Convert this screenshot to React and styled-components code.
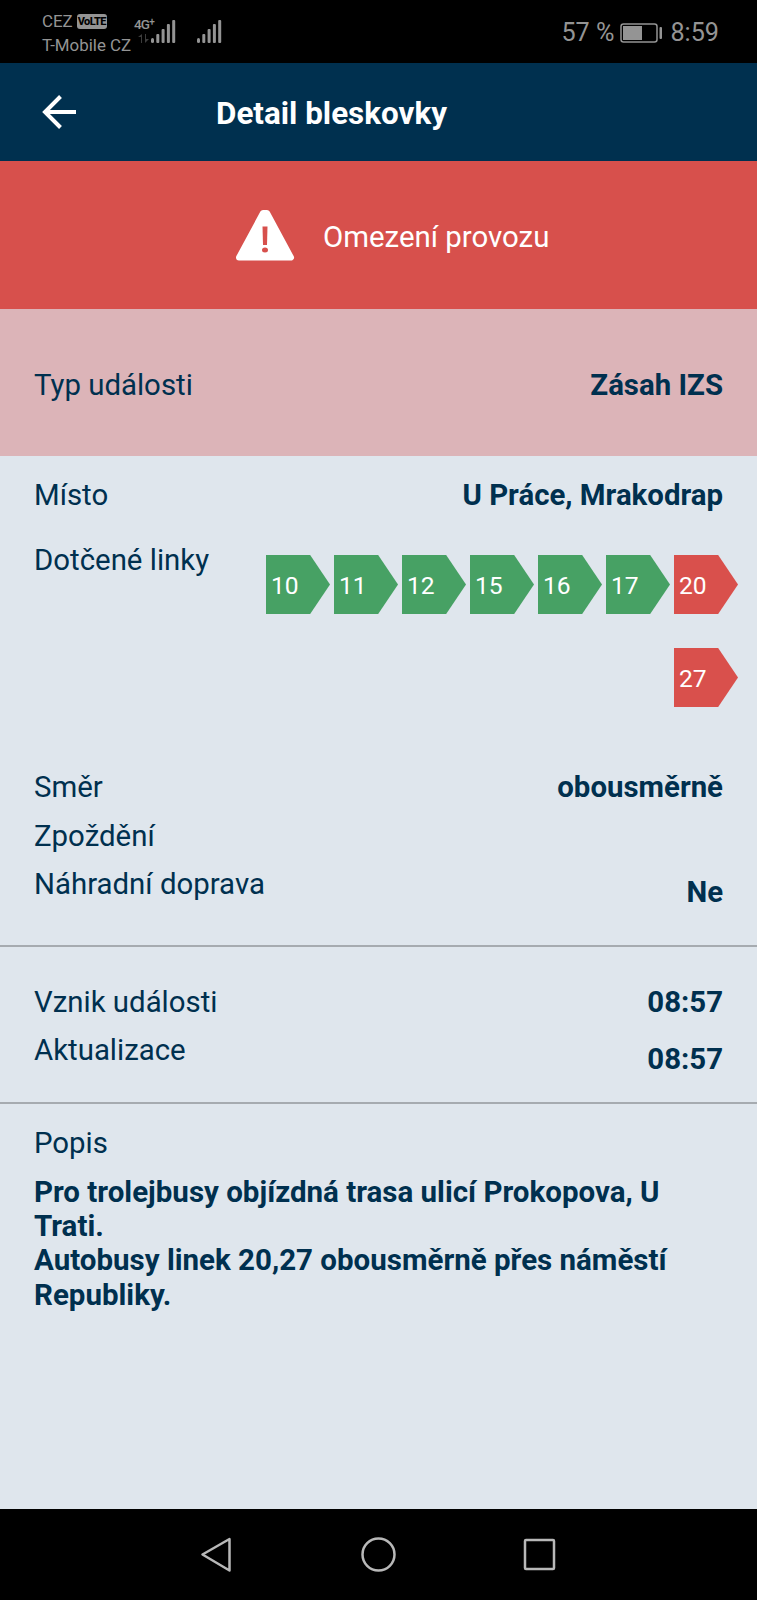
import React from "react";
import styled, { createGlobalStyle } from "styled-components";

const Global = createGlobalStyle`
  * { box-sizing: border-box; }
  body { margin: 0; font-family: Roboto, sans-serif; background: #dfe6ed; }
`;

const Screen = styled.div`
  display: flex;
  flex-direction: column;
  width: 757px;
  height: 1600px;
  background: #dfe6ed;
  color: #00304f;
  font-size: 29.4px;
  line-height: 34.3px;
`;

const StatusBar = styled.div`
  height: 63px;
  flex: none;
  background: #000;
  color: #949494;
  display: flex;
  padding: 10px 38px 0 42px;
`;

const Carriers = styled.div`
  width: 92px;
  font-size: 16.9px;
  line-height: 23.5px;
  white-space: nowrap;
`;

const CarrierLine = styled.div`
  display: flex;
  align-items: center;
  gap: 4px;
`;

const VolteBadge = styled.span`
  width: 30px;
  height: 15px;
  border-radius: 3px;
  background: #949494;
  color: #000;
  font-size: 11px;
  font-weight: 800;
  line-height: 15px;
  letter-spacing: -0.6px;
  text-align: center;
`;

const Network = styled.div`
  display: flex;
  flex-direction: column;
  width: 21px;
  height: 36px;
  padding-top: 7px;
  font-size: 13.5px;
  font-weight: 500;
  line-height: 15px;
`;

const NetworkName = styled.span`
  display: flex;
  letter-spacing: -0.8px;

  sup {
    font-size: 10px;
    line-height: 10px;
  }
`;

const DataArrows = styled.svg`
  width: 11px;
  height: 9px;
  margin: 2px 0 0 4px;
`;

const SignalBars = styled.svg`
  width: 26px;
  height: 24px;
  margin: 9px 25px 0 -5px;
`;

const StatusRight = styled.div`
  display: flex;
  align-items: center;
  height: 47px;
  margin-left: auto;
  font-size: 25.2px;
`;

const Battery = styled.svg`
  width: 43px;
  height: 20px;
  margin: -2px 7px 0 6px;
`;

const Header = styled.header`
  height: 98px;
  flex: none;
  display: flex;
  align-items: center;
  padding-left: 42px;
  background: #00304f;
  color: #fff;
`;

const Title = styled.h1`
  margin: 4px 0 0 139px;
  font-size: 31.4px;
  font-weight: 700;
`;

const Alert = styled.section`
  height: 148px;
  flex: none;
  display: flex;
  align-items: center;
  gap: 28px;
  padding: 4px 0 0 235px;
  background: #d7504c;
  color: #fff;
`;

const WarningIcon = styled.svg`
  width: 60px;
  height: 52px;
  margin-top: -4px;
`;

const EventType = styled.section`
  height: 147px;
  flex: none;
  display: flex;
  align-items: center;
  justify-content: space-between;
  padding: 5px 34px 0;
  background: #dcb4b8;
`;

const Section = styled.section`
  display: flex;
  flex-direction: column;
  flex: none;
  height: ${(p) => p.$height}px;
  padding: ${(p) => p.$top}px 34px 0;
  border-bottom: 2px solid #a6abb0;
`;

const Row = styled.div`
  display: flex;
  flex: none;
  justify-content: space-between;
  height: ${(p) => p.$height || 48.4}px;
`;

const Value = styled.strong`
  font-weight: 700;
  padding-top: ${(p) => p.$drop || 0}px;
`;

const Lines = styled.div`
  display: flex;
  flex-wrap: wrap;
  justify-content: flex-end;
  align-content: flex-start;
  gap: 34px 4px;
  width: 480px;
  margin: 11.6px -15px 0 0;
`;

const LineTag = styled.span`
  width: 64px;
  height: 59px;
  padding: 1px 0 0 5px;
  background: ${(p) => (p.$bus ? "#d9504c" : "#47a164")};
  clip-path: polygon(0 0, 69% 0, 100% 50%, 69% 100%, 0 100%);
  color: #fff;
  font-size: 24.6px;
  line-height: 60px;
`;

const Description = styled.section`
  flex: 1;
  padding: 22px 34px 0;
`;

const DescriptionText = styled.p`
  margin: 14.4px 0 0;
  font-size: 29.5px;
  font-weight: 700;
`;

const NavBar = styled.nav`
  height: 91px;
  flex: none;
  display: flex;
  align-items: center;
  justify-content: center;
  gap: 124px;
  background: #000;
`;

const NavIcon = styled.svg`
  width: 37px;
  height: 37px;
  fill: none;
  stroke: #b8b8b8;
  stroke-width: 2.5;
  stroke-linejoin: round;
`;

const lines = [10, 11, 12, 15, 16, 17, 20, 27];

function Signal() {
  return (
    <SignalBars viewBox="0 0 26 24" fill="#949494">
      <rect x="1" y="19" width="3" height="5" rx="1.5" />
      <rect x="6.3" y="15" width="3" height="9" rx="1" />
      <rect x="11.6" y="10" width="3" height="14" rx="1" />
      <rect x="16.9" y="5" width="3" height="19" rx="1" />
      <rect x="22.2" y="1" width="3" height="23" rx="1" />
    </SignalBars>
  );
}

export default function App() {
  return (
    <Screen>
      <Global />
      <StatusBar>
        <Carriers>
          <CarrierLine>CEZ <VolteBadge>VoLTE</VolteBadge></CarrierLine>
          <CarrierLine>T-Mobile CZ</CarrierLine>
        </Carriers>
        <Network>
          <NetworkName>4G<sup>+</sup></NetworkName>
          <DataArrows viewBox="0 0 11 9" fill="#3c3c3c">
            <path d="M3 9V3H0L4 0V9ZM7 0V9L11 5H8V0Z" />
          </DataArrows>
        </Network>
        <Signal />
        <Signal />
        <StatusRight>
          57 %
          <Battery viewBox="0 0 43 20">
            <rect x="1" y="1" width="36" height="18" rx="2.5" fill="none" stroke="#949494" strokeWidth="1.5" />
            <rect x="3" y="3" width="19" height="14" fill="#949494" />
            <rect x="39.5" y="4" width="2.5" height="12" rx="1" fill="#949494" />
          </Battery>
          8:59
        </StatusRight>
      </StatusBar>
      <Header>
        <svg width="35" height="34" viewBox="0 0 35 34" fill="none" stroke="#fff" strokeWidth="4">
          <path d="M34 17H3M18.5 1.5L3 17L18.5 32.5" />
        </svg>
        <Title>Detail bleskovky</Title>
      </Header>
      <Alert>
        <WarningIcon viewBox="0 0 60 52">
          <path d="M28 4H32L56 48.5H4Z" fill="#fff" stroke="#fff" strokeWidth="6" strokeLinejoin="round" />
          <path d="M27.5 17.5H32.5L32 36H28Z" fill="#d7504c" />
          <ellipse cx="30" cy="41" rx="3" ry="2.5" fill="#d7504c" />
        </WarningIcon>
        <span>Omezení provozu</span>
      </Alert>
      <EventType>
        <span>Typ události</span>
        <Value>Zásah IZS</Value>
      </EventType>
      <Section $height={491} $top={22}>
        <Row $height={65.4}>
          <span>Místo</span>
          <Value>U Práce, Mrakodrap</Value>
        </Row>
        <Row $height={227}>
          <span>Dotčené linky</span>
          <Lines>
            {lines.map((n) => <LineTag key={n} $bus={n >= 20}>{n}</LineTag>)}
          </Lines>
        </Row>
        <Row><span>Směr</span><Value>obousměrně</Value></Row>
        <Row><span>Zpoždění</span></Row>
        <Row><span>Náhradní doprava</span><Value $drop={8}>Ne</Value></Row>
      </Section>
      <Section $height={157} $top={38}>
        <Row><span>Vznik události</span><Value>08:57</Value></Row>
        <Row><span>Aktualizace</span><Value $drop={8.6}>08:57</Value></Row>
      </Section>
      <Description>
        <div>Popis</div>
        <DescriptionText>
          Pro trolejbusy objízdná trasa ulicí Prokopova, U Trati.
          <br />
          Autobusy linek 20,27 obousměrně přes náměstí Republiky.
        </DescriptionText>
      </Description>
      <NavBar>
        <NavIcon viewBox="0 0 37 37"><path d="M30.5 3V34.5L3.5 18.5Z" /></NavIcon>
        <NavIcon viewBox="0 0 37 37"><circle cx="18.5" cy="18.5" r="16" /></NavIcon>
        <NavIcon viewBox="0 0 37 37"><rect x="4" y="4" width="29" height="29" rx="1" /></NavIcon>
      </NavBar>
    </Screen>
  );
}
